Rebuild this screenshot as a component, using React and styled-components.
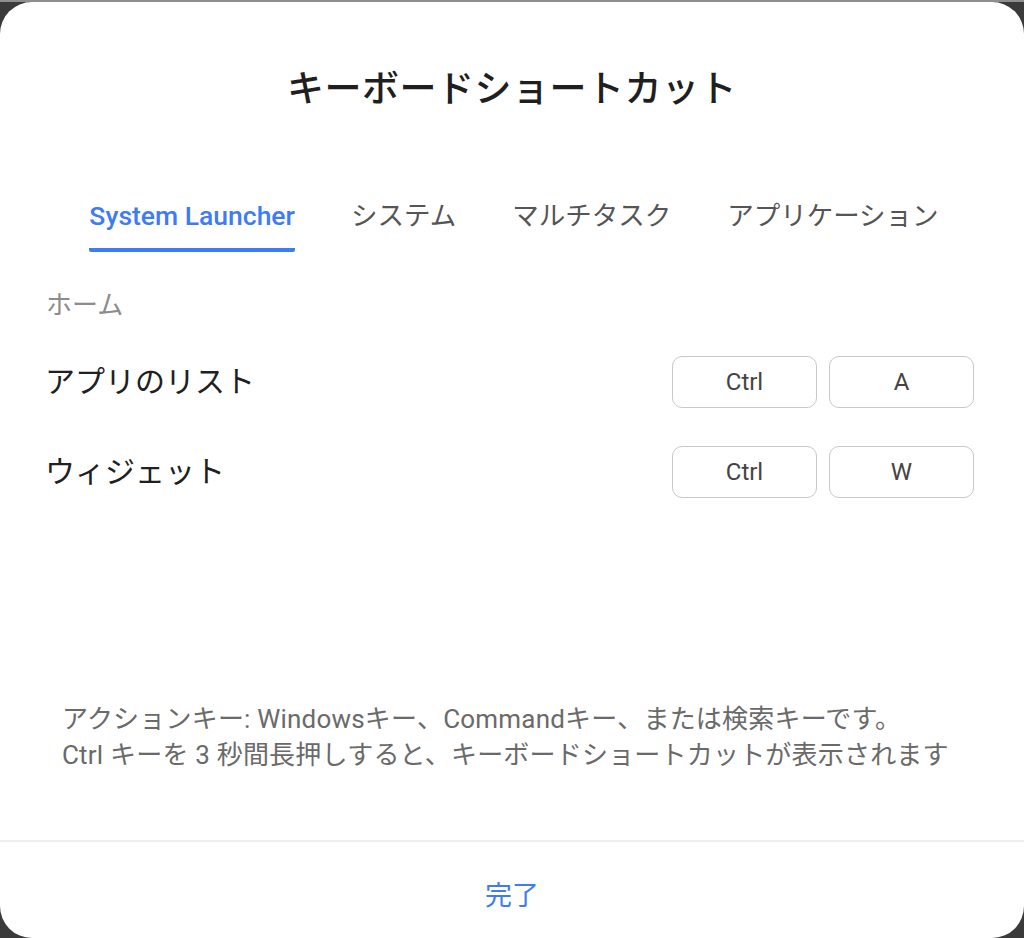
import React from 'react';
import styled, { createGlobalStyle } from 'styled-components';

const tabs = ['System Launcher', 'システム', 'マルチタスク', 'アプリケーション'];

const shortcuts = [
  { label: 'アプリのリスト', keys: ['Ctrl', 'A'] },
  { label: 'ウィジェット', keys: ['Ctrl', 'W'] },
];

const App = () => {
  return (
    <>
      <GlobalStyle />
      <Frame>
        <Dialog>
          <Title>キーボードショートカット</Title>
          <TabBar>
            {tabs.map((t, i) => (
              <Tab key={t} active={i === 0}>
                {t}
              </Tab>
            ))}
          </TabBar>

          <Content>
            <SectionLabel>ホーム</SectionLabel>
            <List>
              {shortcuts.map((s) => (
                <Row key={s.label}>
                  <RowLabel>{s.label}</RowLabel>
                  <Keys>
                    {s.keys.map((k) => (
                      <Key key={k}>{k}</Key>
                    ))}
                  </Keys>
                </Row>
              ))}
            </List>
          </Content>

          <Note>
            <p>アクションキー: Windowsキー、Commandキー、または検索キーです。</p>
            <p>Ctrl キーを 3 秒間長押しすると、キーボードショートカットが表示されます</p>
          </Note>

          <Footer>
            <DoneButton>完了</DoneButton>
          </Footer>
        </Dialog>
      </Frame>
    </>
  );
};
export default App;

const GlobalStyle = createGlobalStyle`
  html, body {
    margin: 0;
    padding: 0;
    background: #3a3a3a;
    font-family: Roboto, "Noto Sans CJK JP", "Noto Sans", sans-serif;
  }
  * { box-sizing: border-box; }
  p { margin: 0; }
`;

// thin grey strip on top, dark showing through the rounded corners
const Frame = styled.div`
  height: 100vh;
  border-top: 2px solid #8e8e8e;
  display: flex;
  flex-direction: column;
`;

const Dialog = styled.div`
  flex: 1;
  background: #fff;
  border-radius: 32px;
  display: flex;
  flex-direction: column;
  overflow: hidden;
`;

const Title = styled.h1`
  margin: 66px 0 0;
  text-align: center;
  font-size: 37px;
  line-height: 44px;
  font-weight: 500;
  color: #1f1f1f;
  letter-spacing: 0.5px;
`;

const TabBar = styled.div`
  display: flex;
  justify-content: center;
  gap: 56px;
  margin-top: 88px;
  padding-left: 4px;
`;

// active tab is blue with the underline, others plain grey
const Tab = styled.div`
  font-size: 26.5px;
  line-height: 32px;
  font-weight: ${(p) => (p.active ? 500 : 400)};
  color: ${(p) => (p.active ? '#3d7cf4' : '#555')};
  padding-bottom: 16px;
  border-bottom: 4px solid ${(p) => (p.active ? '#3d7cf4' : 'transparent')};
  border-radius: 0 0 2px 2px;
`;

const Content = styled.div`
  padding: 37px 50px 0 46px;
`;

const SectionLabel = styled.div`
  font-size: 26px;
  line-height: 32px;
  color: #8c8c8c;
`;

const List = styled.div`
  display: flex;
  flex-direction: column;
  gap: 38px;
  margin-top: 35px;
`;

const Row = styled.div`
  display: flex;
  align-items: center;
  justify-content: space-between;
`;

const RowLabel = styled.div`
  font-size: 30px;
  line-height: 40px;
  color: #202020;
  margin-left: -1px;
`;

const Keys = styled.div`
  display: flex;
  gap: 12px;
`;

const Key = styled.div`
  width: 145px;
  height: 52px;
  border: 1.5px solid #c8c8c8;
  border-radius: 10px;
  display: flex;
  align-items: center;
  justify-content: center;
  font-size: 24px;
  color: #444;
`;

const Note = styled.div`
  margin-top: auto;
  padding: 0 30px 67px 62px;
  font-size: 26px;
  line-height: 36px;
  letter-spacing: 0.2px;
  color: #6a6a6a;
`;

const Footer = styled.div`
  height: 98px;
  border-top: 2px solid #ececec;
  display: flex;
  align-items: center;
  justify-content: center;
  padding-top: 6px;
`;

const DoneButton = styled.button`
  border: none;
  background: none;
  font-family: inherit;
  font-size: 27px;
  color: #3d7cf4;
  cursor: pointer;
`;
